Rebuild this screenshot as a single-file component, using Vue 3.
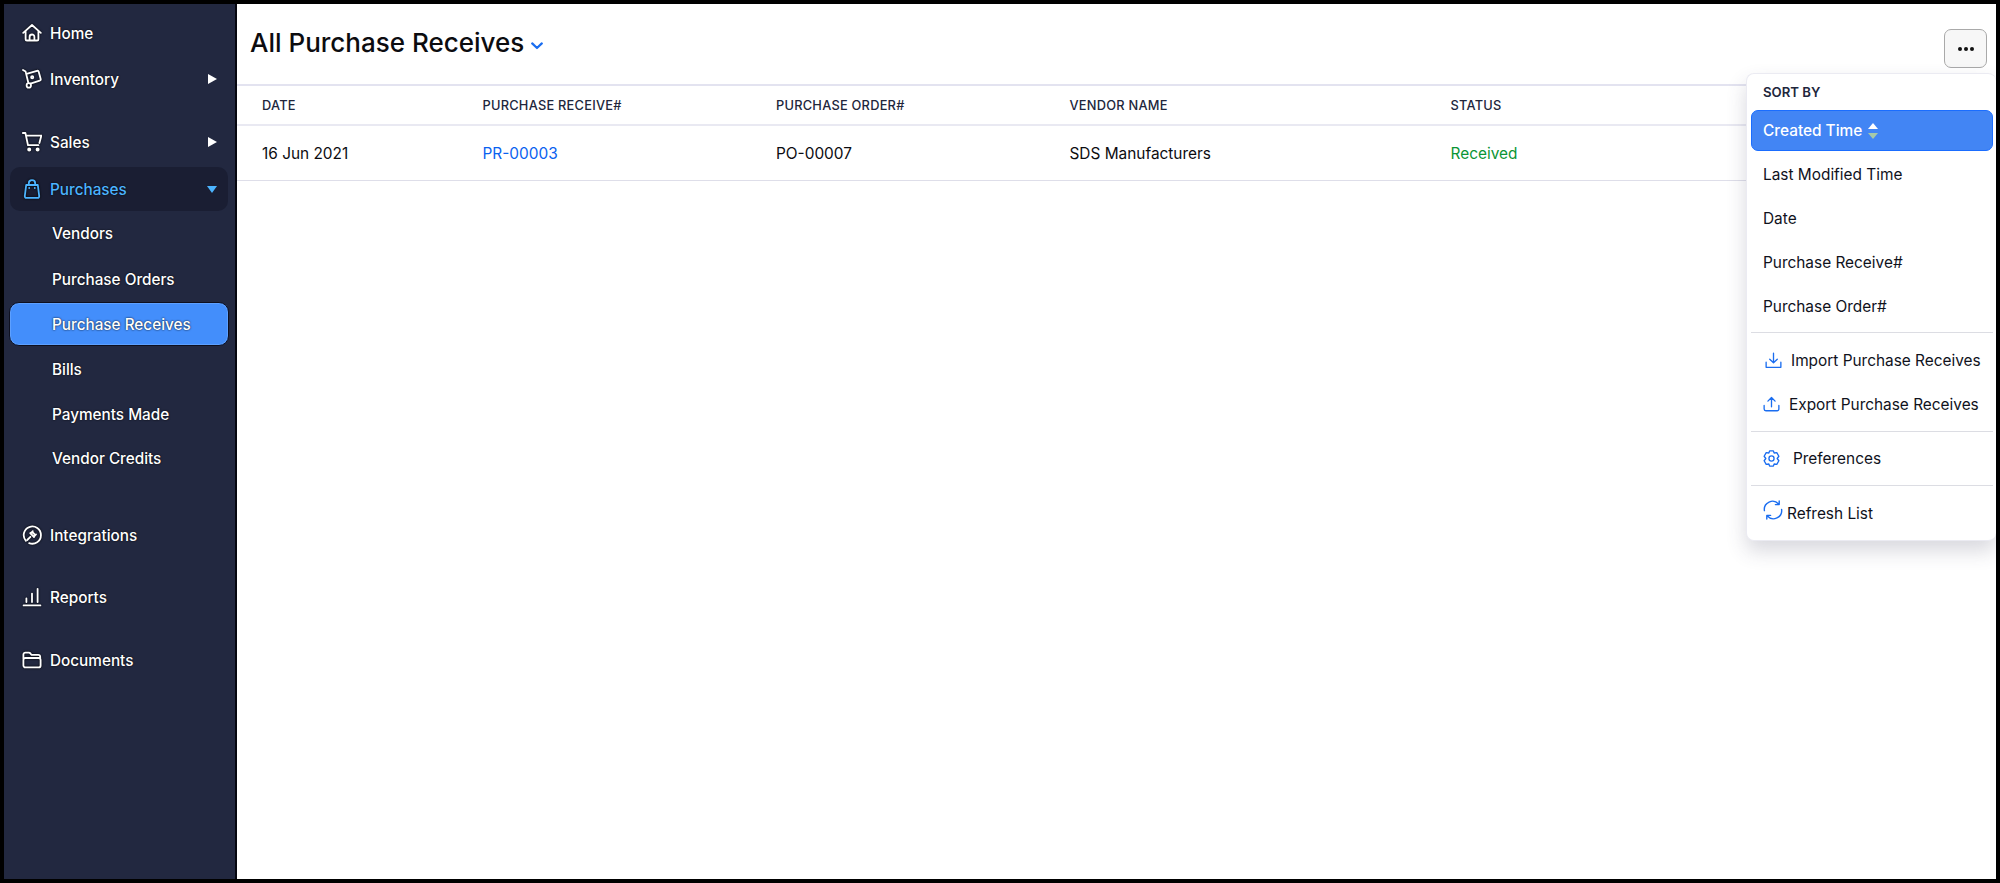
<script setup>
const columns = ['DATE', 'PURCHASE RECEIVE#', 'PURCHASE ORDER#', 'VENDOR NAME', 'STATUS']
const children = [
  { label: 'Vendors' },
  { label: 'Purchase Orders', cls: 'gap-2' },
  { label: 'Purchase Receives', cls: 'gap-1', active: true },
  { label: 'Bills', cls: 'gap-1' },
  { label: 'Payments Made', cls: 'gap-1' },
  { label: 'Vendor Credits' },
]
const sortOptions = ['Last Modified Time', 'Date', 'Purchase Receive#', 'Purchase Order#']
</script>

<template>
  <div class="frame">
    <aside class="sidebar">
      <nav class="nav">
        <a class="item first">
          <svg class="ico" viewBox="0 0 20 20"><path d="M1.2 9.8 10 2l8.8 7.8M3.6 8v8.2a1.3 1.3 0 0 0 1.3 1.3h10.2a1.3 1.3 0 0 0 1.3-1.3V8M7.6 17.5v-3.6a2.4 2.4 0 0 1 4.8 0v3.6" /></svg>
          <span>Home</span>
        </a>
        <a class="item gap-2">
          <svg class="ico" viewBox="0 0 20 20"><path d="M1 1 3.6 2.6l2.6 10.6M5.4 4.6l9.6-2.8a1.4 1.4 0 0 1 1.7 1l2 7.2a1.4 1.4 0 0 1-1 1.7l-9.2 3" /><circle cx="6.8" cy="16.4" r="2.2" /><circle cx="10.2" cy="8.2" r="1.1" /></svg>
          <span>Inventory</span>
          <i class="tri right"></i>
        </a>
        <a class="item gap-19">
          <svg class="ico" viewBox="0 0 20 20"><path d="M.8 1h2.6l2.6 12.2h10.4M4.4 3.6h15l-2 7.4" /><circle cx="7.2" cy="17.6" r="1.1" class="solid" /><circle cx="15.6" cy="17.6" r="1.1" class="solid" /></svg>
          <span>Sales</span>
          <i class="tri right"></i>
        </a>
        <a class="item parent gap-3">
          <svg class="ico" viewBox="0 0 20 20"><path d="M4.2 6h11.6l1.4 11a1.6 1.6 0 0 1-1.6 1.9H4.4A1.6 1.6 0 0 1 2.8 17zM6.8 6V4.4a3.2 3.2 0 0 1 6.4 0V6M7.2 9v.1M12.8 9v.1" /></svg>
          <span>Purchases</span>
          <i class="tri down"></i>
        </a>
        <a
          v-for="child in children"
          :key="child.label"
          class="sub"
          :class="[child.cls, { active: child.active }]"
        >{{ child.label }}</a>
        <a class="item gap-33">
          <svg class="ico" viewBox="0 0 20 20"><path d="M3.9 15.8A8.6 8.6 0 1 1 7.2 18.1" /><path d="M5.2 15 8.4 11.8M8.2 8.2l3.8 3.8a2.7 2.7 0 0 0-3.8-3.8zM10.8 6.2 9.2 7.8M14 9.4 12.4 11" /></svg>
          <span>Integrations</span>
        </a>
        <a class="item gap-18">
          <svg class="ico" viewBox="0 0 20 20"><path d="M1.6 18.4h16.8M4.4 15v-3.6M10 15V6.6M15.6 15V1.8" /></svg>
          <span>Reports</span>
        </a>
        <a class="item gap-19">
          <svg class="ico" viewBox="0 0 20 20"><path d="M1.4 9V4.6a2 2 0 0 1 2-2h3.4c.7 0 1.2.3 1.6.8l1 1.4h6.8a2 2 0 0 1 2 2V9M3.4 8h13.2a2 2 0 0 1 2 2v5.4a2 2 0 0 1-2 2H3.4a2 2 0 0 1-2-2V10a2 2 0 0 1 2-2z" /></svg>
          <span>Documents</span>
        </a>
      </nav>
    </aside>

    <main class="main">
      <header class="head">
        <h1>All Purchase Receives</h1>
        <svg class="chev" viewBox="0 0 12 8"><path d="M1.2 1.4 6 6l4.8-4.6" /></svg>
        <button class="more" type="button" aria-label="More">
          <i></i><i></i><i></i>
        </button>
      </header>

      <div class="grid hrow">
        <div v-for="c in columns" :key="c">{{ c }}</div>
      </div>
      <div class="grid brow">
        <div>16 Jun 2021</div>
        <div class="link">PR-00003</div>
        <div>PO-00007</div>
        <div>SDS Manufacturers</div>
        <div class="ok">Received</div>
      </div>

      <div class="menu">
        <div class="menu-title">SORT BY</div>
        <div class="opt selected">
          <span>Created Time</span>
          <span class="updown"><i class="u"></i><i class="d"></i></span>
        </div>
        <div v-for="o in sortOptions" :key="o" class="opt">{{ o }}</div>
        <hr class="rule r1" />
        <div class="act a-import">
          <svg class="mi" viewBox="0 0 18 18"><path d="M9 1.2v10M5 7.6l4 3.8 4-3.8M1.2 10.8v5.4h15.6v-5.4" /></svg>
          <span>Import Purchase Receives</span>
        </div>
        <div class="act a-export">
          <svg class="mi" viewBox="0 0 18 18"><path d="M9 11.5V1.8M5.2 5.4 9 1.6l3.8 3.8M1.2 10v3.8a1.8 1.8 0 0 0 1.8 1.8h12a1.8 1.8 0 0 0 1.8-1.8V10" /></svg>
          <span>Export Purchase Receives</span>
        </div>
        <hr class="rule r2" />
        <div class="act a-pref">
          <svg class="mi" viewBox="0 0 18 18"><path d="M7 1h4l.8 2.2 2.8-.4 2.2 3.8L15 9l1.8 2.4-2.2 3.8-2.8-.4L11 17H7l-.8-2.2-2.8.4-2.2-3.8L3 9 1.2 6.6l2.2-3.8 2.8.4z" /><circle cx="9" cy="9" r="2.7" /></svg>
          <span>Preferences</span>
        </div>
        <hr class="rule r3" />
        <div class="act a-refresh">
          <svg class="mi big" viewBox="0 0 20 20"><path d="M1.4 10.6A8.2 8.2 0 0 1 15.6 4M18.6 9.4A8.2 8.2 0 0 1 4.4 16M16.2 1v3.6h-3.8M3.8 19v-3.6h3.8" /></svg>
          <span>Refresh List</span>
        </div>
      </div>
    </main>
  </div>
</template>

<style scoped>
.frame {
  box-sizing: border-box;
  width: 2000px;
  height: 883px;
  border: 4px solid #000;
  display: flex;
  background: #fff;
  font-family: Inter, "Liberation Sans", sans-serif;
  overflow: hidden;
}
.sidebar {
  box-sizing: border-box;
  width: 233px;
  flex: none;
  background: #222840;
  border-right: 2px solid #05060f;
}
.nav {
  display: flex;
  flex-direction: column;
  padding: 7px 7px 0 6px;
}
.item,
.sub {
  display: flex;
  align-items: center;
  box-sizing: border-box;
  height: 44px;
  color: #fff;
  font-size: 15.3px;
  font-weight: 500;
  text-shadow: 0 0 2px #000;
  border-radius: 10px;
}
.item { padding: 0 11px 0 12px; }
.item span { margin-left: 8px; flex: 1; }
.sub { padding-left: 42px; }
.first { margin-top: 0; }
.gap-1 { margin-top: 1px; }
.gap-2 { margin-top: 2px; }
.gap-3 { margin-top: 3px; }
.gap-18 { margin-top: 18px; }
.gap-19 { margin-top: 19px; }
.gap-33 { margin-top: 33px; }
.ico {
  width: 20px;
  height: 20px;
  flex: none;
  fill: none;
  stroke: #fff;
  stroke-width: 1.8;
  stroke-linecap: round;
  stroke-linejoin: round;
  filter: drop-shadow(0 0 1px #000);
}
.ico .solid { fill: #fff; }
.parent {
  background: #1a1e33;
  color: #4cb4ff;
}
.parent .ico { stroke: #4cb4ff; }
.active {
  background: #438efb;
  border: 1px solid #0e1020;
  box-shadow: inset 0 0 0 1px #5da0ff;
  margin-left: -1px;
  margin-right: -1px;
  padding-left: 42px;
}
.tri {
  width: 0;
  height: 0;
  border-style: solid;
}
.tri.right {
  border-width: 5px 0 5px 9px;
  border-color: transparent transparent transparent #fff;
}
.tri.down {
  border-width: 7px 5px 0;
  border-color: #4cb4ff transparent transparent;
}

.main {
  position: relative;
  flex: 1;
  min-width: 0;
}
.head {
  display: flex;
  align-items: flex-start;
  box-sizing: border-box;
  height: 82px;
  padding: 0 9px 0 13px;
  border-bottom: 2px solid #e3e3f0;
}
h1 {
  margin: 0;
  font-size: 26px;
  font-weight: 500;
  color: #0c0c10;
  line-height: 78px;
}
.chev {
  width: 12px;
  height: 8px;
  margin: 38px 0 0 7px;
  fill: none;
  stroke: #1a6df0;
  stroke-width: 2.2;
  stroke-linecap: round;
  stroke-linejoin: round;
}
.more {
  margin: 25px 0 0 auto;
  width: 43px;
  height: 39px;
  display: flex;
  align-items: center;
  justify-content: center;
  gap: 2px;
  padding: 0;
  background: #f7f7f7;
  border: 1px solid #a9a9a9;
  border-radius: 7px;
}
.more i {
  width: 4px;
  height: 4px;
  border-radius: 50%;
  background: #111;
}
.grid {
  display: grid;
  grid-template-columns: 220.5px 293.5px 293.5px 381px 1fr;
  padding-left: 25px;
  align-items: center;
}
.hrow {
  box-sizing: border-box;
  height: 40px;
  border-bottom: 2px solid #e9e9f2;
  font-size: 12.8px;
  font-weight: 500;
  letter-spacing: 0.25px;
  color: #21263c;
}
.brow {
  box-sizing: border-box;
  height: 55px;
  border-bottom: 1px solid #dedee9;
  font-size: 15.4px;
  color: #0c0c10;
}
.link { color: #0a62f0; }
.ok { color: #0a9535; }

.menu {
  position: absolute;
  top: 69px;
  right: 0;
  box-sizing: border-box;
  width: 250px;
  height: 468px;
  padding: 0 4px;
  background: #fff;
  border: 1px solid #ebebf2;
  border-right: 0;
  border-radius: 8px;
  box-shadow: 0 10px 20px rgba(60, 60, 90, 0.2);
  color: #10121c;
  font-size: 15.4px;
}
.menu-title {
  height: 36px;
  padding: 0 12px;
  box-sizing: border-box;
  display: flex;
  align-items: center;
  font-size: 13.2px;
  font-weight: 600;
  color: #21263c;
}
.opt {
  display: flex;
  align-items: center;
  gap: 6px;
  box-sizing: border-box;
  height: 44px;
  padding-left: 12px;
  margin-top: -.25px;
}
.selected {
  height: 41px;
  width: 242px;
  margin: 0 0 2px 0;
  background: #4285f4;
  border: 1px solid #1a6dff;
  border-radius: 7px;
  padding-left: 11px;
  color: #fff;
  font-weight: 500;
}
.updown {
  display: inline-flex;
  flex-direction: column;
  gap: 4px;
}
.updown i {
  width: 0;
  height: 0;
  border-left: 5px solid transparent;
  border-right: 5px solid transparent;
}
.updown .u { border-bottom: 6px solid #fff; }
.updown .d { border-top: 6px solid #a6c9a8; }
.rule {
  height: 1px;
  margin: 0;
  width: 242px;
  border: 0;
  background: #dcdde3;
}
.r1 { margin-top: 4px; }
.act {
  display: flex;
  align-items: center;
  height: 44px;
  white-space: nowrap;
}
.mi {
  width: 17px;
  height: 17px;
  flex: none;
  fill: none;
  stroke: #1a6df0;
  stroke-width: 1.4;
  stroke-linecap: round;
  stroke-linejoin: round;
}
.mi.big { width: 20px; height: 20px; margin-top: -6px; }
.a-import { padding-left: 14px; margin-top: 5px; }
.a-import span { margin-left: 9px; }
.a-export { padding-left: 12px; }
.a-export span { margin-left: 9px; }
.a-pref { padding-left: 12px; height: 53px; }
.a-pref span { margin-left: 13px; }
.a-refresh { padding-left: 12px; height: 54px; }
.a-refresh span { margin-left: 4px; }
.r2 { margin-top: 5px; }
</style>

<style>
html, body { margin: 0; overflow: hidden; background: #000; }
</style>
